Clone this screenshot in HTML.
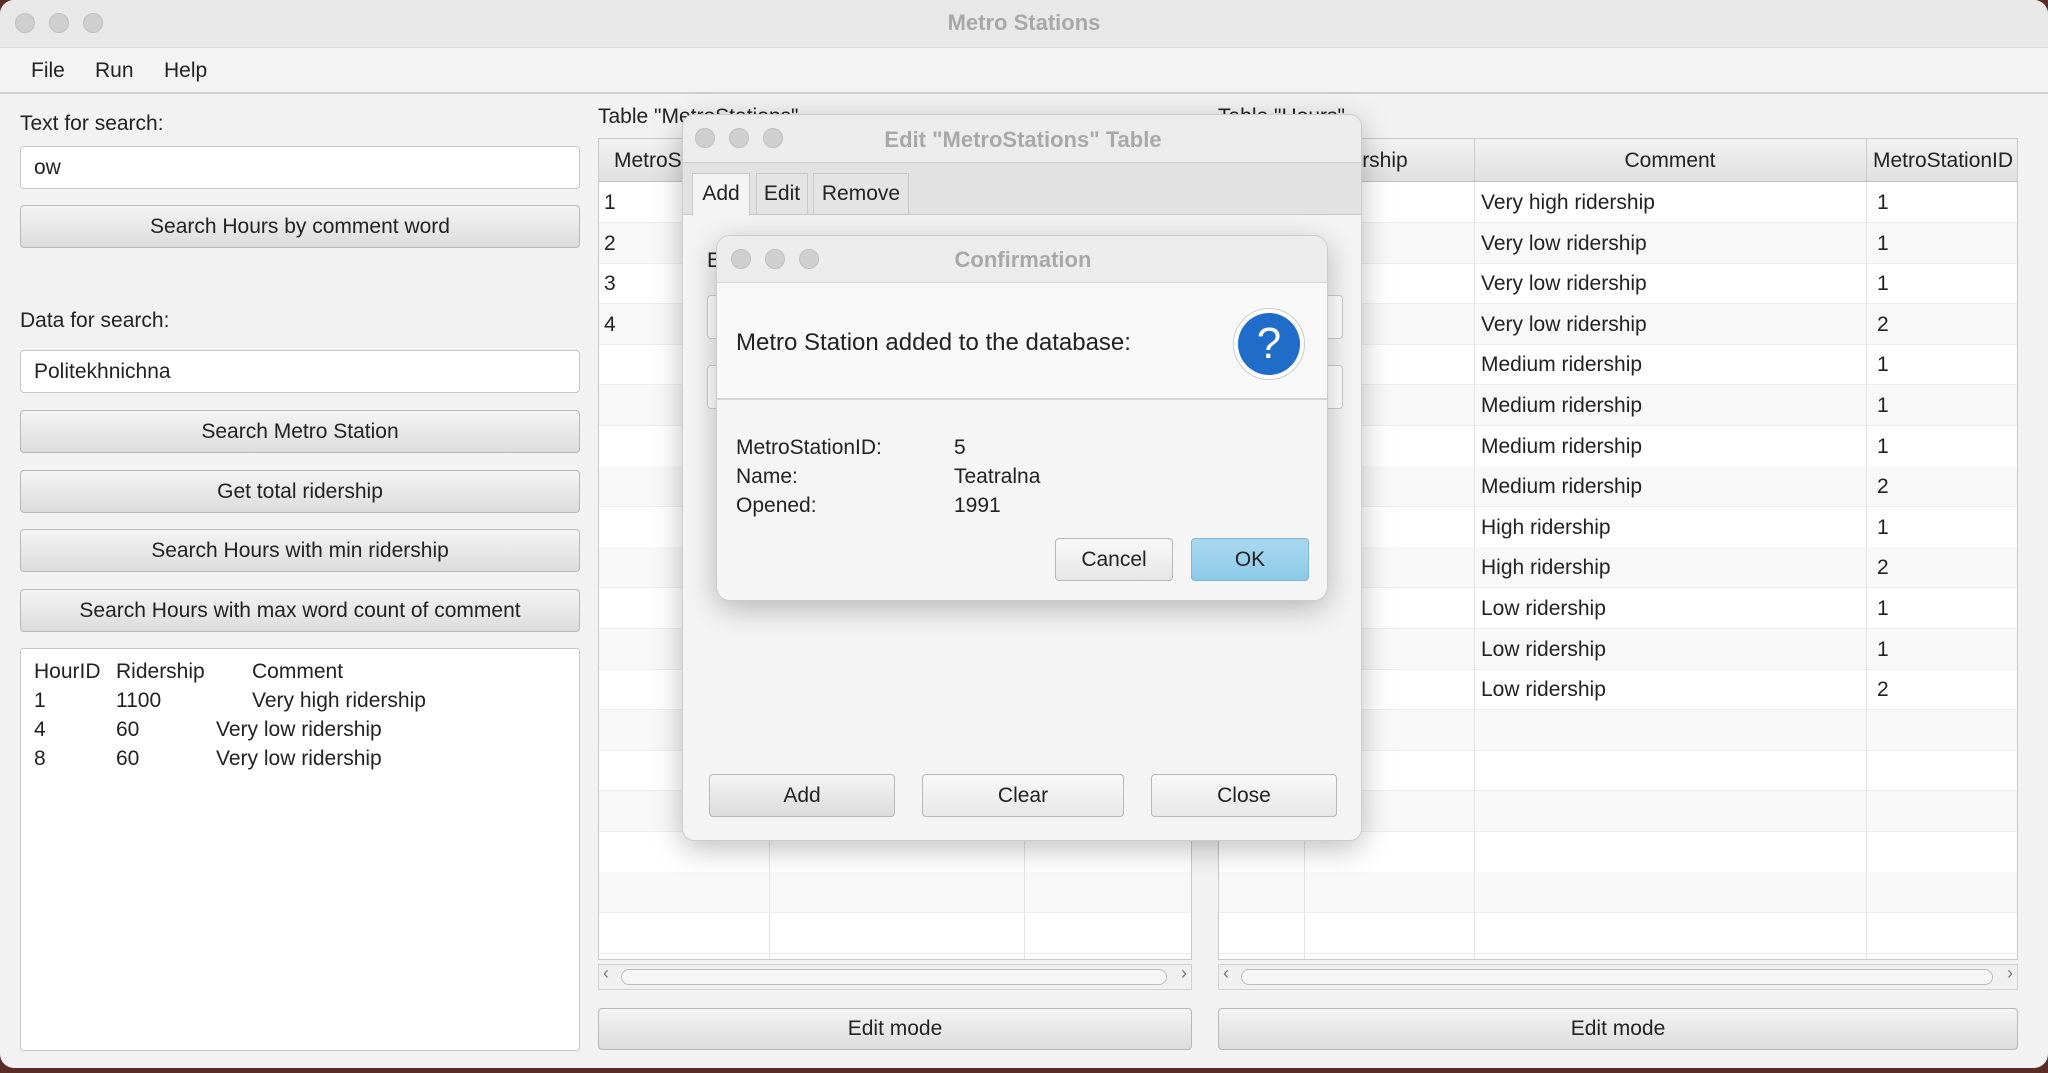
<!DOCTYPE html>
<html><head><meta charset="utf-8"><style>
*{box-sizing:border-box;margin:0;padding:0}
body{width:2048px;height:1073px;background:#5a2e26;font-family:"Liberation Sans",sans-serif;font-size:21px;color:#222;position:relative;overflow:hidden}
.a{position:absolute}
.win{left:0;top:0;width:2048px;height:1068px;background:#f2f2f2;border-radius:14px;overflow:hidden}
.tb{left:0;top:0;width:2048px;height:48px;background:#e8e8e8;border-bottom:1px solid #d8d8d8}
.dot{width:20px;height:20px;border-radius:50%;background:#cfcfcf;border:1px solid #c0c0c0}
.ttl{font-weight:bold;color:#a8a8a8;font-size:22px}
.menu{left:0;top:48px;width:2048px;height:46px;background:#f3f3f3;border-bottom:2px solid #cfcfcf}
.fld{background:#fff;border:1px solid #c8c8c8;border-radius:4px;padding-left:13px;line-height:42px}
.btn{border:1px solid #b8b8b8;border-radius:4px;background:linear-gradient(#f4f4f4,#dcdcdc);text-align:center}
.tbl{background:#fff;border:1px solid #c8c8c8}
.hd{background:linear-gradient(#f2f2f2,#e0e0e0);border-bottom:1px solid #c0c0c0}
.row{position:absolute;left:0;right:0;height:41px;border-bottom:1px solid #eee}
.vl{position:absolute;top:0;bottom:0;width:1px;background:#e4e4e4}
.c{position:absolute;line-height:41px}
</style></head><body>
<div class="a win">
 <div class="a tb"></div>
 <div class="a dot" style="left:15px;top:13px"></div><div class="a dot" style="left:49px;top:13px"></div><div class="a dot" style="left:83px;top:13px"></div>
 <div class="a ttl" style="left:0;width:2048px;top:10px;text-align:center">Metro Stations</div>
 <div class="a menu"></div>
 <div class="a" style="left:31px;top:59px">File</div><div class="a" style="left:95px;top:59px">Run</div><div class="a" style="left:164px;top:59px">Help</div>

 <div class="a" style="left:20px;top:112px">Text for search:</div>
 <div class="a fld" style="left:20px;top:146px;width:560px;height:43px">ow</div>
 <div class="a btn" style="left:20px;top:205px;width:560px;height:43px;line-height:41px">Search Hours by comment word</div>
 <div class="a" style="left:20px;top:309px">Data for search:</div>
 <div class="a fld" style="left:20px;top:350px;width:560px;height:43px">Politekhnichna</div>
 <div class="a btn" style="left:20px;top:410px;width:560px;height:43px;line-height:41px">Search Metro Station</div>
 <div class="a btn" style="left:20px;top:470px;width:560px;height:43px;line-height:41px">Get total ridership</div>
 <div class="a btn" style="left:20px;top:529px;width:560px;height:43px;line-height:41px">Search Hours with min ridership</div>
 <div class="a btn" style="left:20px;top:589px;width:560px;height:43px;line-height:41px">Search Hours with max word count of comment</div>
 <div class="a" style="left:20px;top:648px;width:560px;height:403px;background:#fff;border:1px solid #c8c8c8;border-radius:3px;line-height:29px">
  <div class="a" style="left:13px;top:8px">HourID</div><div class="a" style="left:95px;top:8px">Ridership</div><div class="a" style="left:231px;top:8px">Comment</div>
  <div class="a" style="left:13px;top:37px">1</div><div class="a" style="left:95px;top:37px">1100</div><div class="a" style="left:231px;top:37px">Very high ridership</div>
  <div class="a" style="left:13px;top:66px">4</div><div class="a" style="left:95px;top:66px">60</div><div class="a" style="left:195px;top:66px">Very low ridership</div>
  <div class="a" style="left:13px;top:95px">8</div><div class="a" style="left:95px;top:95px">60</div><div class="a" style="left:195px;top:95px">Very low ridership</div>
 </div>

 <div class="a" style="left:598px;top:105px">Table "MetroStations"</div>
 <div class="a tbl" style="left:598px;top:138px;width:594px;height:822px;overflow:hidden">
  <div class="a hd" style="left:0;top:0;width:594px;height:43px"><div class="c" style="left:15px;line-height:43px">MetroStationID</div></div>
  <div class="a" style="left:0;top:43px;width:594px;height:780px">
   <div class="row" style="top:0"></div><div class="row" style="top:40.6px;background:#f8f8f8"></div><div class="row" style="top:81.2px"></div><div class="row" style="top:121.8px;background:#f8f8f8"></div><div class="row" style="top:162.4px"></div><div class="row" style="top:203px;background:#f8f8f8"></div><div class="row" style="top:243.6px"></div><div class="row" style="top:284.2px;background:#f8f8f8"></div><div class="row" style="top:324.8px"></div><div class="row" style="top:365.4px;background:#f8f8f8"></div><div class="row" style="top:406px"></div><div class="row" style="top:446.6px;background:#f8f8f8"></div><div class="row" style="top:487.2px"></div><div class="row" style="top:527.8px;background:#f8f8f8"></div><div class="row" style="top:568.4px"></div><div class="row" style="top:609px;background:#f8f8f8"></div><div class="row" style="top:649.6px"></div><div class="row" style="top:690.2px;background:#f8f8f8"></div><div class="row" style="top:730.8px"></div>
   <div class="vl" style="left:170px"></div><div class="vl" style="left:425px"></div>
   <div class="c" style="left:5px;top:0">1</div><div class="c" style="left:5px;top:40.6px">2</div><div class="c" style="left:5px;top:81.2px">3</div><div class="c" style="left:5px;top:121.8px">4</div>
  </div>
 </div>
 <div class="a" style="left:598px;top:964px;width:594px;height:26px;background:#f0f0f0;border:1px solid #d0d0d0"><div class="a" style="left:22px;top:4px;width:546px;height:16px;border:1px solid #bbb;border-radius:8px;background:#f6f6f6"></div><div class="a" style="left:4px;top:-2px;font-size:18px;color:#777">‹</div><div class="a" style="right:4px;top:-2px;font-size:18px;color:#777">›</div></div>
 <div class="a btn" style="left:598px;top:1008px;width:594px;height:42px;line-height:40px">Edit mode</div>

 <div class="a" style="left:1218px;top:105px">Table "Hours"</div>
 <div class="a tbl" style="left:1218px;top:138px;width:800px;height:822px;overflow:hidden">
  <div class="a hd" style="left:0;top:0;width:800px;height:43px">
   <div class="c" style="left:15px;line-height:43px">HourID</div><div class="c" style="left:100px;line-height:43px">Ridership</div><div class="c" style="left:255px;width:392px;text-align:center;line-height:43px">Comment</div><div class="c" style="left:654px;line-height:43px">MetroStationID</div>
   <div class="vl" style="left:255px;background:#ccc"></div><div class="vl" style="left:647px;background:#ccc"></div>
  </div>
  <div class="a" style="left:0;top:43px;width:800px;height:780px">
   <div class="row" style="top:0"></div><div class="row" style="top:40.6px;background:#f8f8f8"></div><div class="row" style="top:81.2px"></div><div class="row" style="top:121.8px;background:#f8f8f8"></div><div class="row" style="top:162.4px"></div><div class="row" style="top:203px;background:#f8f8f8"></div><div class="row" style="top:243.6px"></div><div class="row" style="top:284.2px;background:#f8f8f8"></div><div class="row" style="top:324.8px"></div><div class="row" style="top:365.4px;background:#f8f8f8"></div><div class="row" style="top:406px"></div><div class="row" style="top:446.6px;background:#f8f8f8"></div><div class="row" style="top:487.2px"></div><div class="row" style="top:527.8px;background:#f8f8f8"></div><div class="row" style="top:568.4px"></div><div class="row" style="top:609px;background:#f8f8f8"></div><div class="row" style="top:649.6px"></div><div class="row" style="top:690.2px;background:#f8f8f8"></div><div class="row" style="top:730.8px"></div>
   <div class="vl" style="left:85px"></div><div class="vl" style="left:255px"></div><div class="vl" style="left:647px"></div>
   <div class="c" style="left:262px;top:0">Very high ridership</div><div class="c" style="left:658px;top:0">1</div>
   <div class="c" style="left:262px;top:40.6px">Very low ridership</div><div class="c" style="left:658px;top:40.6px">1</div>
   <div class="c" style="left:262px;top:81.2px">Very low ridership</div><div class="c" style="left:658px;top:81.2px">1</div>
   <div class="c" style="left:262px;top:121.8px">Very low ridership</div><div class="c" style="left:658px;top:121.8px">2</div>
   <div class="c" style="left:262px;top:162.4px">Medium ridership</div><div class="c" style="left:658px;top:162.4px">1</div>
   <div class="c" style="left:262px;top:203px">Medium ridership</div><div class="c" style="left:658px;top:203px">1</div>
   <div class="c" style="left:262px;top:243.6px">Medium ridership</div><div class="c" style="left:658px;top:243.6px">1</div>
   <div class="c" style="left:262px;top:284.2px">Medium ridership</div><div class="c" style="left:658px;top:284.2px">2</div>
   <div class="c" style="left:262px;top:324.8px">High ridership</div><div class="c" style="left:658px;top:324.8px">1</div>
   <div class="c" style="left:262px;top:365.4px">High ridership</div><div class="c" style="left:658px;top:365.4px">2</div>
   <div class="c" style="left:262px;top:406px">Low ridership</div><div class="c" style="left:658px;top:406px">1</div>
   <div class="c" style="left:262px;top:446.6px">Low ridership</div><div class="c" style="left:658px;top:446.6px">1</div>
   <div class="c" style="left:262px;top:487.2px">Low ridership</div><div class="c" style="left:658px;top:487.2px">2</div>
  </div>
 </div>
 <div class="a" style="left:1218px;top:964px;width:800px;height:26px;background:#f0f0f0;border:1px solid #d0d0d0"><div class="a" style="left:22px;top:4px;width:752px;height:16px;border:1px solid #bbb;border-radius:8px;background:#f6f6f6"></div><div class="a" style="left:4px;top:-2px;font-size:18px;color:#777">‹</div><div class="a" style="right:4px;top:-2px;font-size:18px;color:#777">›</div></div>
 <div class="a btn" style="left:1218px;top:1008px;width:800px;height:42px;line-height:40px">Edit mode</div>
</div>

<!-- Edit dialog -->
<div class="a" style="left:682px;top:114px;width:680px;height:727px;background:#f4f4f4;border:1px solid #ccc;border-radius:12px;box-shadow:0 8px 30px rgba(0,0,0,.25);overflow:hidden">
 <div class="a" style="left:0;top:0;width:680px;height:48px;background:#ececec;border-bottom:1px solid #cfcfcf"></div>
 <div class="a dot" style="left:12px;top:13px"></div><div class="a dot" style="left:46px;top:13px"></div><div class="a dot" style="left:80px;top:13px"></div>
 <div class="a ttl" style="left:0;width:680px;top:12px;text-align:center">Edit "MetroStations" Table</div>
 <div class="a" style="left:0;top:48px;width:680px;height:52px;background:#e2e2e2;border-bottom:1px solid #c8c8c8"></div>
 <div class="a" style="left:9px;top:58px;width:58px;height:43px;background:#f4f4f4;border:1px solid #c8c8c8;border-bottom:none;text-align:center;line-height:40px">Add</div>
 <div class="a" style="left:73px;top:58px;width:52px;height:42px;background:#e4e4e4;border:1px solid #c8c8c8;text-align:center;line-height:40px">Edit</div>
 <div class="a" style="left:130px;top:58px;width:96px;height:42px;background:#e4e4e4;border:1px solid #c8c8c8;text-align:center;line-height:40px">Remove</div>
 <div class="a" style="left:24px;top:134px">E</div>
 <div class="a" style="left:24px;top:180px;width:636px;height:44px;border:1px solid #ccc;border-radius:4px;background:#fff"></div>
 <div class="a" style="left:24px;top:250px;width:636px;height:44px;border:1px solid #ccc;border-radius:4px;background:#fff"></div>
 <div class="a btn" style="left:26px;top:659px;width:186px;height:43px;line-height:41px">Add</div>
 <div class="a btn" style="left:239px;top:659px;width:202px;height:43px;line-height:41px;background:linear-gradient(#f8f8f8,#e8e8e8)">Clear</div>
 <div class="a btn" style="left:468px;top:659px;width:186px;height:43px;line-height:41px;background:linear-gradient(#f8f8f8,#e8e8e8)">Close</div>
</div>

<!-- Confirmation -->
<div class="a" style="left:716px;top:235px;width:612px;height:366px;background:#f5f5f5;border:1px solid #ccc;border-radius:14px;box-shadow:0 8px 30px rgba(0,0,0,.25);overflow:hidden">
 <div class="a" style="left:0;top:0;width:612px;height:47px;background:#ececec;border-bottom:1px solid #d6d6d6"></div>
 <div class="a dot" style="left:14px;top:13px"></div><div class="a dot" style="left:48px;top:13px"></div><div class="a dot" style="left:82px;top:13px"></div>
 <div class="a ttl" style="left:0;width:612px;top:11px;text-align:center">Confirmation</div>
 <div class="a" style="left:0;top:47px;width:612px;height:117px;background:#f8f8f8;border-bottom:2px solid #d4d4d4"></div>
 <div class="a" style="left:19px;top:93px;font-size:24px">Metro Station added to the database:</div>
 <div class="a" style="left:516px;top:72px;width:72px;height:72px;border-radius:50%;background:#fff;border:1px solid #ccc"></div>
 <div class="a" style="left:521px;top:77px;width:62px;height:62px;border-radius:50%;background:#1f6cc9;color:#fff;text-align:center;line-height:62px;font-size:44px">?</div>
 <div class="a" style="left:19px;top:197px;line-height:29px">MetroStationID:<br>Name:<br>Opened:</div>
 <div class="a" style="left:237px;top:197px;line-height:29px">5<br>Teatralna<br>1991</div>
 <div class="a btn" style="left:338px;top:302px;width:118px;height:43px;line-height:41px;background:linear-gradient(#f8f8f8,#e6e6e6)">Cancel</div>
 <div class="a" style="left:474px;top:302px;width:118px;height:43px;line-height:41px;text-align:center;border:1px solid #7fb4d4;border-radius:4px;background:linear-gradient(#a9d8ef,#8ccae8)">OK</div>
</div>
</body></html>
